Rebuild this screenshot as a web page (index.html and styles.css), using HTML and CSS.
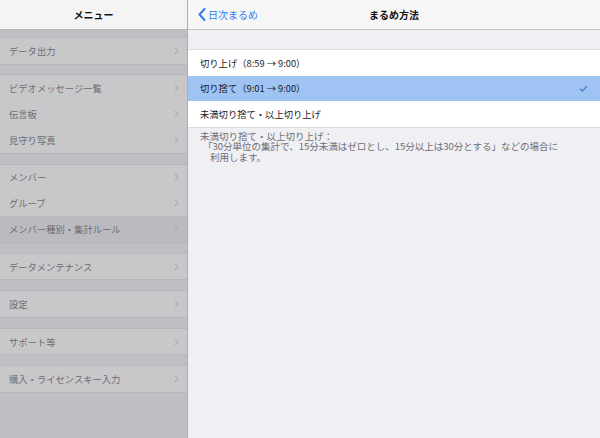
FILE: index.html
```html
<!DOCTYPE html>
<html lang="ja">
<head>
<meta charset="utf-8">
<title>まるめ方法</title>
<link rel="stylesheet" href="styles.css">
</head>
<body>
<aside class="sidebar">
  <header class="nav side-nav"><span class="nav-title">メニュー</span></header>
  <div class="side-list">
    <div class="group">
      <div class="srow"><span>データ出力</span><svg class="chev" viewBox="0 0 5 8"><polyline points="1,1 4,4 1,7"/></svg></div>
    </div>
    <div class="group">
      <div class="srow"><span>ビデオメッセージ一覧</span><svg class="chev" viewBox="0 0 5 8"><polyline points="1,1 4,4 1,7"/></svg></div>
      <div class="srow"><span>伝言板</span><svg class="chev" viewBox="0 0 5 8"><polyline points="1,1 4,4 1,7"/></svg></div>
      <div class="srow"><span>見守り写真</span><svg class="chev" viewBox="0 0 5 8"><polyline points="1,1 4,4 1,7"/></svg></div>
    </div>
    <div class="group">
      <div class="srow"><span>メンバー</span><svg class="chev" viewBox="0 0 5 8"><polyline points="1,1 4,4 1,7"/></svg></div>
      <div class="srow"><span>グループ</span><svg class="chev" viewBox="0 0 5 8"><polyline points="1,1 4,4 1,7"/></svg></div>
      <div class="srow active"><span>メンバー種別・集計ルール</span><svg class="chev" viewBox="0 0 5 8"><polyline points="1,1 4,4 1,7"/></svg></div>
    </div>
    <div class="group">
      <div class="srow"><span>データメンテナンス</span><svg class="chev" viewBox="0 0 5 8"><polyline points="1,1 4,4 1,7"/></svg></div>
    </div>
    <div class="group">
      <div class="srow"><span>設定</span><svg class="chev" viewBox="0 0 5 8"><polyline points="1,1 4,4 1,7"/></svg></div>
    </div>
    <div class="group">
      <div class="srow"><span>サポート等</span><svg class="chev" viewBox="0 0 5 8"><polyline points="1,1 4,4 1,7"/></svg></div>
    </div>
    <div class="group">
      <div class="srow"><span>購入・ライセンスキー入力</span><svg class="chev" viewBox="0 0 5 8"><polyline points="1,1 4,4 1,7"/></svg></div>
    </div>
  </div>
</aside>
<main class="detail">
  <header class="nav detail-nav">
    <a class="back"><svg class="back-chev" viewBox="0 0 8 13"><polyline points="6.5,1 1.5,6.5 6.5,12"/></svg><span>日次まるめ</span></a>
    <span class="nav-title">まるめ方法</span>
  </header>
  <div class="content">
    <div class="section">
      <div class="row">切り上げ（8:59 → 9:00）</div>
      <div class="row selected">切り捨て（9:01 → 9:00）<svg class="check" viewBox="0 0 9 7"><polyline points="1,3.8 3.3,6 8,1"/></svg></div>
      <div class="row">未満切り捨て・以上切り上げ</div>
    </div>
    <div class="footer">
      <div>未満切り捨て・以上切り上げ：</div>
      <div class="l2">「30分単位の集計で、15分未満はゼロとし、15分以上は30分とする」などの場合に</div>
      <div class="l3">利用します。</div>
    </div>
  </div>
</main>
</body>
</html>
```
FILE: styles.css
```css
html, body {
  margin: 0;
  padding: 0;
}
body {
  width: 600px;
  height: 438px;
  overflow: hidden;
  display: flex;
  font-family: "Noto Sans CJK JP", "Noto Sans", sans-serif;
  font-size: 10px;
  -webkit-font-smoothing: antialiased;
}

/* nav bars */
.nav {
  height: 29px;
  flex: 0 0 29px;
  border-bottom: 1px solid #c4c4c7;
  display: flex;
  align-items: center;
  justify-content: center;
  position: relative;
}
.nav-title {
  font-weight: 700;
  font-size: 10px;
  color: #111;
}
.side-nav {
  background: #f4f4f4;
  border-bottom-color: #b9b9bc;
}
.detail-nav {
  background: #f7f7f7;
}

/* sidebar */
.sidebar {
  width: 187px;
  flex: 0 0 187px;
  border-right: 1px solid #adadb1;
  background: #bfbfc3;
  display: flex;
  flex-direction: column;
}
.side-list {
  padding-top: 7px;
  display: flex;
  flex-direction: column;
  gap: 9.7px;
}
.group {
  border-top: 1px solid #b6b6ba;
  border-bottom: 1px solid #b6b6ba;
  background: #c8c8cb;
}
.srow {
  height: 25.8px;
  display: flex;
  align-items: center;
  justify-content: space-between;
  padding: 0 8px 0 9px;
  color: #6c6c70;
  font-size: 9.3px;
}
.srow.active {
  background: #bbbbbf;
}
.chev {
  width: 5px;
  height: 8px;
  fill: none;
  stroke: #afafb3;
  stroke-width: 1.1;
}

/* detail */
.detail {
  flex: 1;
  display: flex;
  flex-direction: column;
  background: #efeff4;
}
.back {
  position: absolute;
  left: 10px;
  top: 0;
  height: 29px;
  display: flex;
  align-items: center;
  gap: 2px;
  color: #2f7cf6;
  font-size: 10px;
}
.back-chev {
  width: 8px;
  height: 13px;
  fill: none;
  stroke: #2f7cf6;
  stroke-width: 2;
  stroke-linecap: round;
  stroke-linejoin: round;
}
.content {
  padding-top: 19px;
}
.section {
  border-top: 1px solid #dcdce0;
  border-bottom: 1px solid #dcdce0;
  background: #fff;
}
.row {
  height: 25.6px;
  display: flex;
  align-items: center;
  justify-content: space-between;
  padding: 0 12px 0 12px;
  color: #1a1a1a;
  font-size: 9.3px;
}
.row.selected {
  background: #9fc3f3;
}
.check {
  width: 9px;
  height: 7px;
  fill: none;
  stroke: #4f7bc8;
  stroke-width: 1.3;
  margin-right: 0;
}
.footer {
  padding: 3px 12px 0 12px;
  color: #6d6d72;
  font-size: 9.5px;
  line-height: 10.5px;
}
.footer .l2 {
  padding-left: 3px;
}
.footer .l3 {
  padding-left: 10px;
}
```
